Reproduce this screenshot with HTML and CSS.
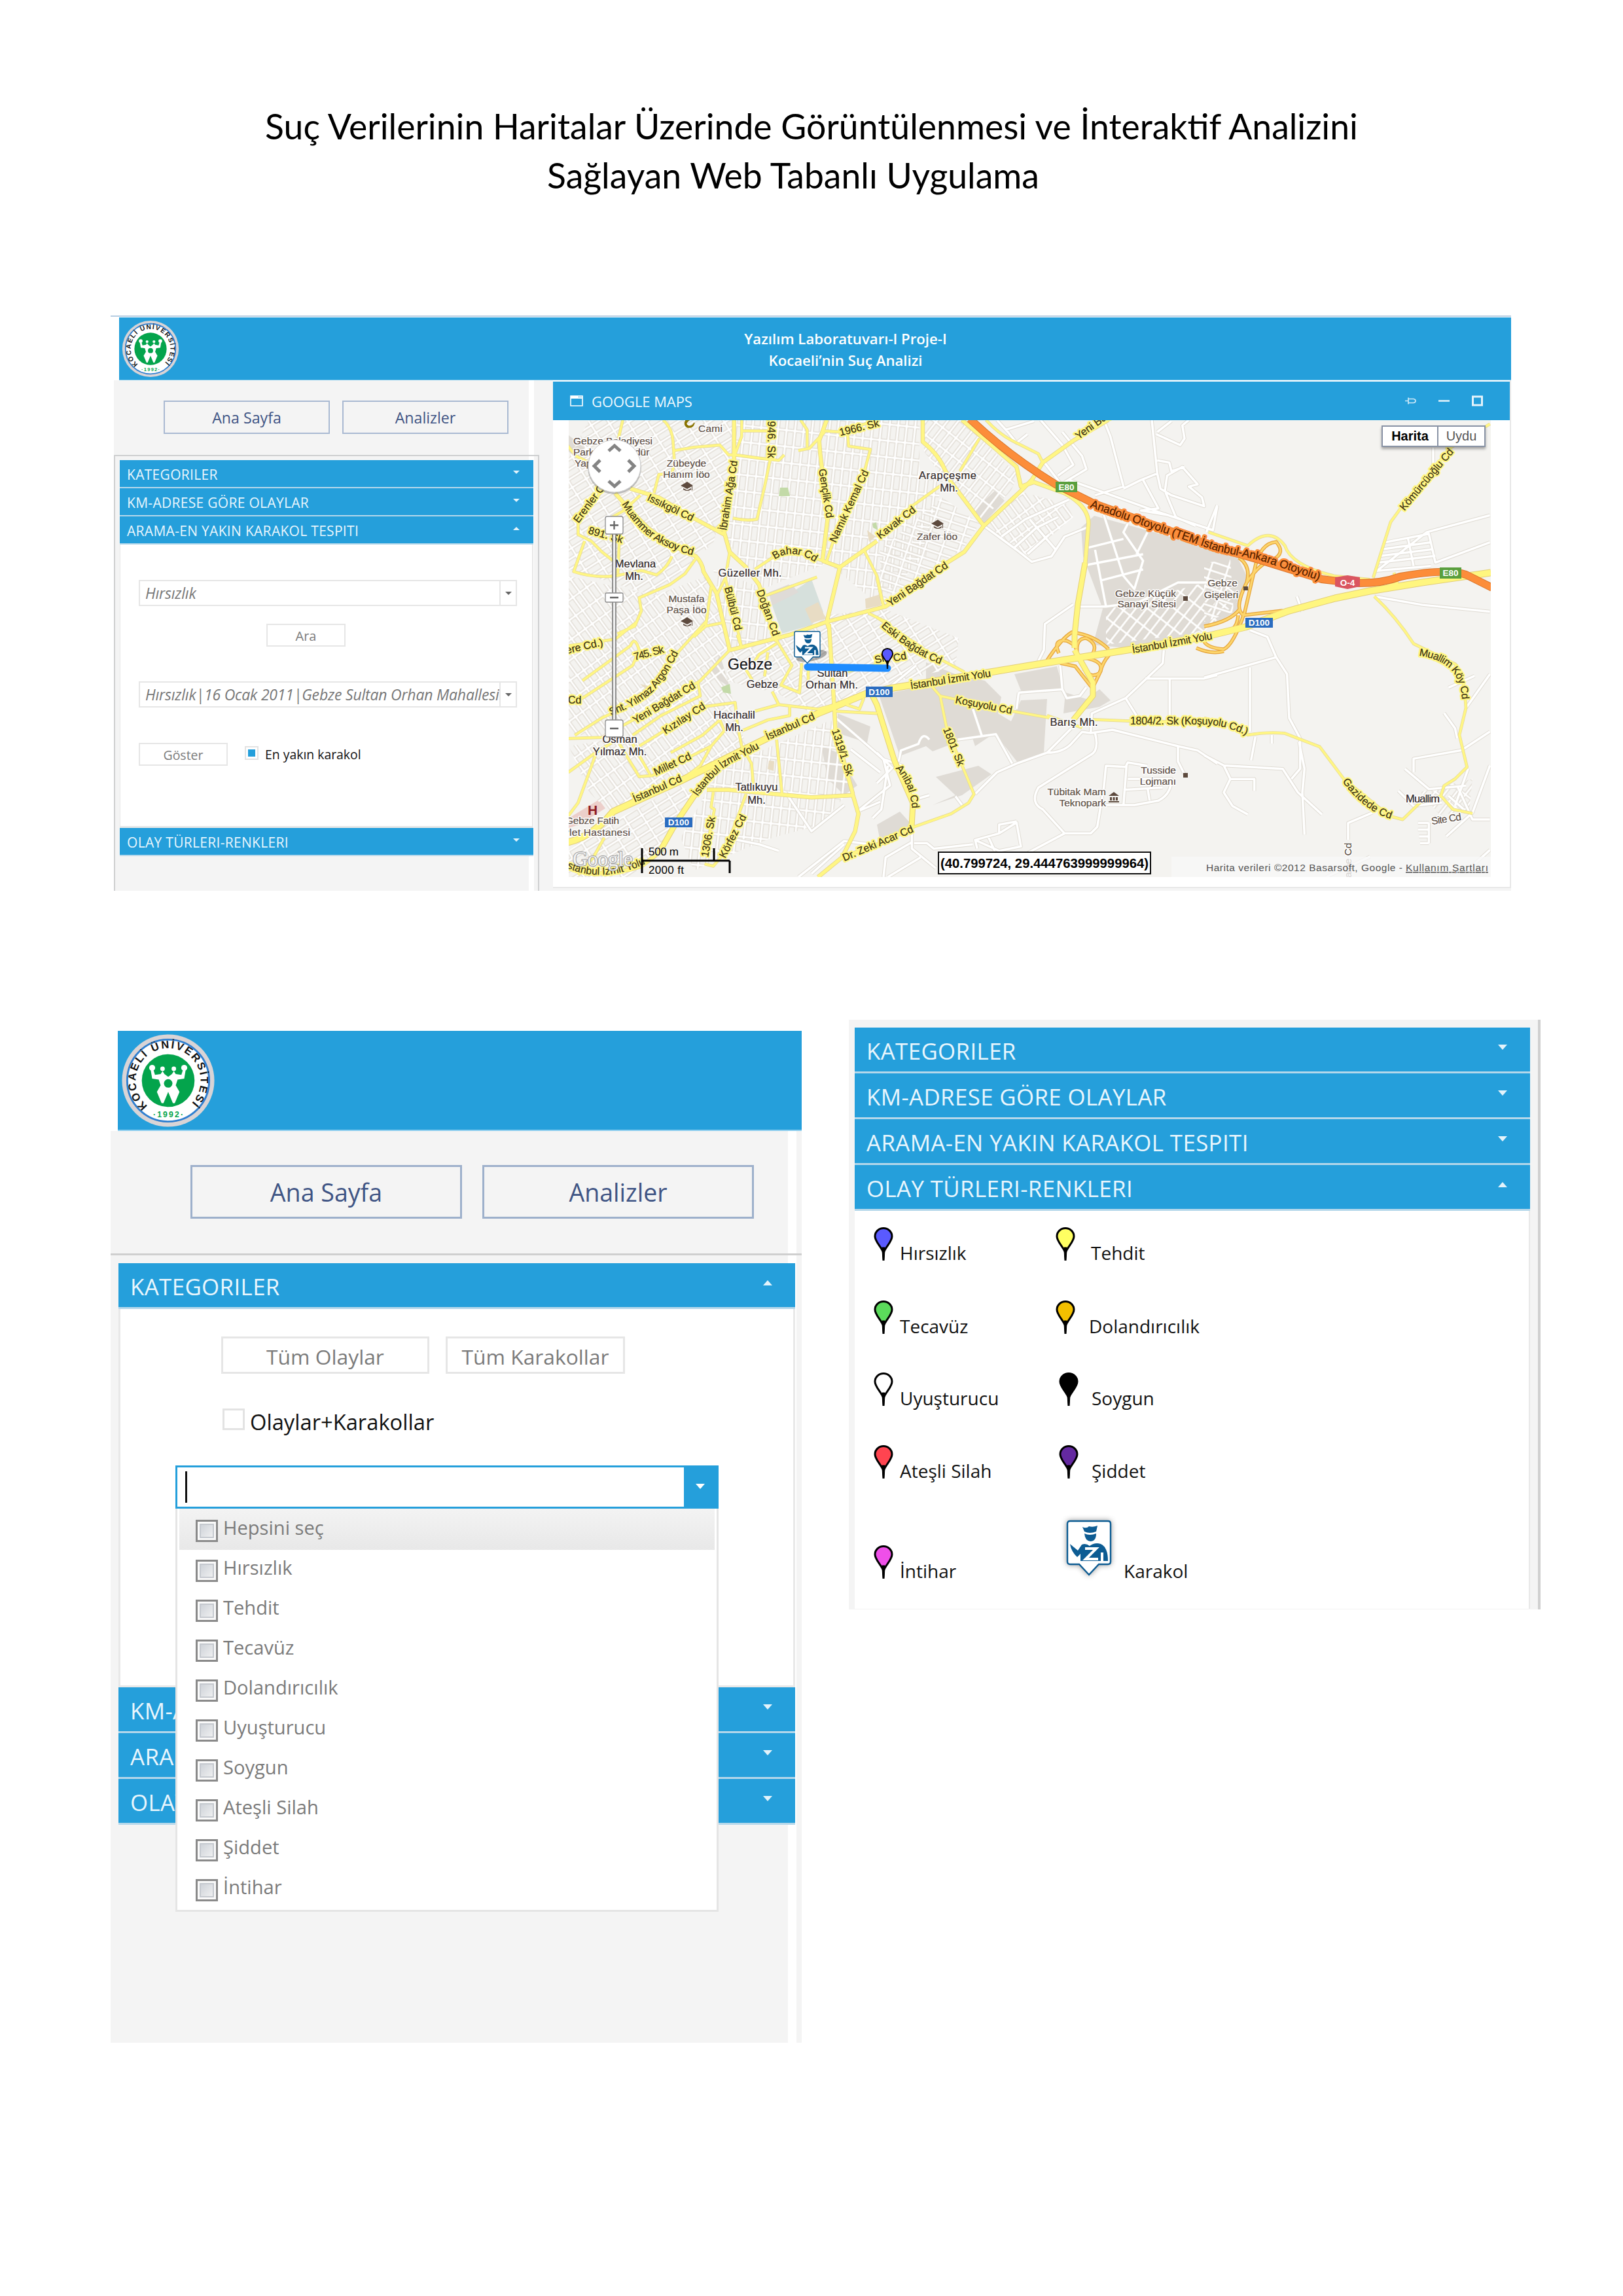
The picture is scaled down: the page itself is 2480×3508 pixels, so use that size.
FILE: index.html
```html
<!DOCTYPE html>
<html lang="tr">
<head>
<meta charset="utf-8">
<title>Kocaeli'nin Suç Analizi</title>
<link rel="stylesheet" href="styles.css">
</head>
<body>
<svg width="0" height="0" class="sprites" aria-hidden="true">
  <defs>
    <symbol id="pin" viewBox="0 0 30 51">
      <path d="M15 39C11 29 2 22 2 14A13 12.500 0 0 1 28 14C28 22 19 29 15 39Z" fill="currentColor" stroke="#000" stroke-width="3"/>
      <path d="M12.800 31L14 51H16L17.200 31Z" stroke="#000" stroke-width="1"/>
    </symbol>
    <symbol id="police" viewBox="0 0 70 86">
      <path d="M6 2H64Q68 2 68 6V64Q68 68 64 68H50L35 84L20 68H6Q2 68 2 64V6Q2 2 6 2Z" fill="#fff" stroke="#0d5c93" stroke-width="2.4"/>
      <path d="M25 11Q31 14 35 10Q41 12 48 9L46 18Q36 22 28 18ZM28 21Q36 25 46 21Q46 33 37 33Q29 32 28 21Z" fill="#0d5c93"/>
      <path d="M6 37L18 47L24 38Q30 35 36 40Q44 34 53 37Q64 42 64 63H57V50H53V63H22V52L17 57Q8 49 6 37Z" fill="#0d5c93"/>
      <path d="M29 44H46L30 60H49" fill="none" stroke="#fff" stroke-width="4"/>
    </symbol>
    <symbol id="crest" viewBox="0 0 100 100">
      <circle cx="50" cy="50" r="49" fill="#d9d4d6"/>
      <circle cx="50" cy="50" r="43.5" fill="#fff" stroke="#2f7fd0" stroke-width="2"/>
      <circle cx="50" cy="50" r="28" fill="#04a44c"/>
      <path id="crest-arc" d="M29 77.500A34.500 34.500 0 1 1 71 77.500" fill="none"/>
      <text font-family="Liberation Sans, Arial, sans-serif" font-size="11.500" font-weight="700" fill="#111"><textPath href="#crest-arc" textLength="165" startOffset="1">KOCAELİ ÜNİVERSİTESİ</textPath></text>
      <text x="50" y="89" text-anchor="middle" font-family="Liberation Sans, Arial, sans-serif" font-size="8.500" font-weight="700" fill="#04a44c" textLength="32">·1992·</text>
      <g fill="#fff"><circle cx="44" cy="37.500" r="2.400"/><circle cx="56" cy="37.500" r="2.400"/><circle cx="33" cy="36.500" r="3.200"/><circle cx="67" cy="36.500" r="3.200"/>
      <path d="M31.500 39H34.500L36 44L42 43L44 40L46 43L50 46L54 43L56 40L58 43L64 44L65.500 39H68.500L67 48L60 49L58 55L62 62L57 74H55L50 62L45 74H43L38 62L42 55L40 49L33 48Z"/></g>
      <circle cx="50" cy="53" r="4.500" fill="#04a44c"/>
    </symbol>
  </defs>
</svg>

<h1 class="title"><span>Suç Verilerinin Haritalar Üzerinde Görüntülenmesi ve İnteraktif Analizini</span><span class="second">Sağlayan Web Tabanlı Uygulama</span></h1>

<section class="app">
  <header class="app-head">
    <svg class="crest"><use href="#crest"/></svg>
    <div class="app-name"><span>Yazılım Laboratuvarı-I Proje-I</span><span class="line2">Kocaeli’nin Suç Analizi</span></div>
  </header>
  <div class="app-body">
    <aside class="side">
      <nav class="nav"><button>Ana Sayfa</button><button>Analizler</button></nav>
      <div class="accordion">
        <div class="bar">KATEGORILER<i class="caret"></i></div>
        <div class="bar">KM-ADRESE GÖRE OLAYLAR<i class="caret"></i></div>
        <div class="bar">ARAMA-EN YAKIN KARAKOL TESPITI<i class="caret up"></i></div>
        <div class="pane search">
          <div class="select"><em>Hırsızlık</em><span><i class="caret dark"></i></span></div>
          <button class="plain ara">Ara</button>
          <div class="select second"><em class="long">Hırsızlık|16 Ocak 2011|Gebze Sultan Orhan Mahallesi</em><span><i class="caret dark"></i></span></div>
          <div class="show"><button class="plain">Göster</button><i class="tick"></i><label>En yakın karakol</label></div>
        </div>
        <div class="bar">OLAY TÜRLERI-RENKLERI<i class="caret"></i></div>
      </div>
    </aside>
    <main class="window">
      <div class="window-head">
        <svg width="20" height="17" viewBox="0 0 20 17"><path d="M1 1H19V16H1Z" fill="none" stroke="#fff" stroke-width="1.600"/><path d="M1 1H19V5H1Z" fill="#fff"/><path d="M13 2.500H14.500M16 2.500H17.500" stroke="#259fdb" stroke-width="1.500"/></svg>
        <h2>GOOGLE MAPS</h2>
        <div class="tools">
          <svg width="17" height="17" viewBox="0 0 17 17"><path d="M0 8.500H5M5 3.500V13.500M5 5.500H13Q16 6 16 8.500Q16 11 13 11.500H5" fill="none" stroke="#cfe9f8" stroke-width="1.700"/></svg>
          <svg width="17" height="17" viewBox="0 0 17 17"><path d="M0 8.500H17" stroke="#e4f3fb" stroke-width="2.500"/></svg>
          <svg width="17" height="17" viewBox="0 0 17 17"><path d="M1.500 2H15.500V15H1.500Z" fill="none" stroke="#e4f3fb" stroke-width="3"/></svg>
        </div>
      </div>
      <div class="map">
      <svg class="map-svg" width="1409" height="698" viewBox="869 642 1409 698">
        <defs>
          <pattern id="grid" width="13" height="25" patternUnits="userSpaceOnUse"><path d="M0 3H13M3 0V25" stroke="#dad4ca" stroke-width="5.200"/><path d="M0 3H13M3 0V25" stroke="#fff" stroke-width="3"/></pattern>
          <pattern id="g60" href="#grid" patternTransform="rotate(58)"/>
          <pattern id="g5" href="#grid" patternTransform="rotate(6)"/>
          <pattern id="g35" href="#grid" patternTransform="rotate(38)"/>
          <pattern id="gm35" href="#grid" patternTransform="rotate(-36)"/>
          <pattern id="gm70" href="#grid" patternTransform="rotate(-72)"/>
          <g id="yellow" fill="none" stroke-linejoin="round">
            <g transform="translate(840 560) scale(.33333)">
              <path d="M335 245L315 330M520 245Q560 280 565 340L572 440L560 490L500 495L478 580M572 385L660 370L780 360L820 405L850 405L960 420L1050 430L1075 405M880 245V320L850 400M885 295H1000M1010 430L985 550L950 700Q900 710 840 695"/>
              <path d="M250 560L130 700V770L190 800L240 850L290 890M160 800L110 940Q200 970 300 960L420 935L490 955Q540 920 560 870M320 770L312 950M415 590L340 660L270 700M670 880L620 950L550 1000L410 1060L420 1120L390 1190L310 1225"/>
              <path d="M825 850L805 970L770 1040M805 970L860 1200L880 1290M740 1010L715 1190L790 1175M715 1190L660 1240M940 930L1030 870L1100 840L1250 890M1225 965L990 1050M1260 295L1330 300L1500 245M1150 245L1180 290V370M1140 385L1190 375L1260 300M1365 300L1370 365L1470 380L1440 490L1300 800L1270 890M1440 840L1500 960L1530 1100M80 360L120 410L200 450M1460 1130L1560 1180"/>
            </g>
            <g transform="translate(840 950) scale(.33333)">
              <path d="M720 -5L560 170L440 350L240 440L115 520M85 110L300 80L400 0M150 270L370 110Q390 60 410 130L380 200L150 350H85M825 130L690 270L530 370L290 500L240 530L85 535M680 280L690 340L510 430L380 520M85 690L210 600L300 545M85 890L130 830L210 610M320 560L410 710L470 705L600 640L740 570L800 500L780 450M380 560L460 700M410 570L540 490L700 390L850 370L860 470L880 570L925 650L935 770M555 600L700 520L780 450M610 720L690 660L740 570"/>
              <path d="M1040 85L1110 200L1060 290L1145 325L1155 190M900 220L930 270M1040 100L960 150L940 180M1020 320L1050 380L940 410M1050 380L1230 400L1310 380M880 500L1000 450L1100 430V385M1185 200V280M1040 540L1065 790M750 780L740 850L755 860L715 1060M900 790L860 900L800 1060L750 1120L710 1110M1310 410L1500 420M1360 380L1420 400L1440 350M1280 250L1560 180M250 990L200 1080L130 1160M860 60L880 120M1040 40V85M1000 140L985 250"/>
            </g>
            <g transform="translate(1340 560) scale(.33333)"><path d="M470 330L380 480M500 245Q560 310 620 340L740 400L760 440M0 780L160 640L300 540M0 970L30 1100M0 1150L60 1190L250 1320L400 1400"/></g>
            <g transform="translate(1340 950) scale(.33333)"><path d="M255 300L290 340L360 355L620 410L790 440M290 340L320 490L445 790L420 830L340 880L170 940L0 1030M990 448L1160 455L1560 460M780 430L940 485"/></g>
            <g transform="translate(1840 560) scale(.33333 .5165)"><path d="M20 490L200 530Q300 470 370 530Q400 590 600 620L760 630M0 1040L110 1060L200 1090Q290 1080 370 1085L530 1125L640 1220L850 1330L910 1340L990 1290L1085 1270M780 680Q880 740 960 820L1150 880Q1190 900 1200 1010L1170 1090L1205 1185L1150 1220L1100 1240L1085 1270L1140 1310L1230 1322M775 625L855 460L900 420L1130 240L1310 170M870 610L885 640L790 660"/></g>
          </g>
          <g id="wide" fill="none" stroke-linejoin="round">
            <g transform="translate(840 560) scale(.33333)"><path d="M845 245V440L800 760L825 850L900 920L960 1000L1000 1140L1040 1260M370 560L500 600L650 690L800 770M300 580L360 650L450 740L560 820L670 870Q700 900 705 940L765 1040L790 1150L825 1300M1270 245L1235 340L1240 400L1275 690L1250 890M1250 890L1330 920L1500 800M1330 920L1270 1170L1280 1200M825 1300L1100 1230L1270 1170L1540 1100L1650 1020L1820 900L1900 850L1990 730L2160 570L2210 520L2260 440L2400 340L2560 245"/></g>
            <g transform="translate(1340 560) scale(.33333)"><path d="M210 245V345Q280 400 310 470L340 530L490 730M390 245L640 460L660 550L720 530L860 580Q970 640 970 720L955 900"/></g>
            <g transform="translate(840 950) scale(.33333)"><path d="M1280 10L1305 400L1310 500L1390 790M720 770H820L1200 805L1390 795L1415 880L1400 960L1340 1080L1230 1170M1340 1080L1560 1000M85 1130Q250 1180 420 1120L500 1060"/></g>
          </g>
          <g id="trunk" fill="none" stroke-linejoin="round">
            <path d="M868 1287Q907 1277 937 1240L1040 1193L1133 1147L1250 1090L1323 1060L1365 1051L1513 1027L1597 1013L1723 993L1840 973L1903 958L1967 934L2040 914L2093 903L2173 890L2278 875"/>
          </g>
          <g id="branch" fill="none" stroke-linejoin="round">
            <path d="M1007 1303L1033 1257L1060 1217L1093 1175L1133 1147M1333 1063L1340 1077L1367 1163L1395 1227L1393 1263M1658 860L1647 923L1642 970V990M1642 993L1670 1043V1063L1640 1100"/>
          </g>
          <g id="ramps" fill="none">
            <path d="M1598 1012Q1622 975 1638 966Q1672 970 1694 992M1618 998Q1608 976 1630 979Q1650 988 1643 1000M1646 996Q1644 975 1660 975Q1678 984 1670 998M1656 1005Q1690 1010 1680 1028Q1668 1038 1656 1022M1620 1013L1643 1018L1672 1055M1700 995Q1685 1010 1682 1025L1670 1050M1917 870L1902 935Q1885 985 1870 992Q1845 990 1840 980M1892 940Q1890 970 1860 966L1840 973M1917 870Q1925 830 1950 828Q1965 845 1945 855Q1925 860 1905 890M1893 852Q1912 865 1905 890Q1885 930 1900 940L1960 933M1840 957Q1880 950 1895 930M1828 990Q1850 1000 1870 995"/>
          </g>
          <path id="tem" d="M1482 640Q1540 695 1613 740L1673 770L1860 837L1923 855L2020 885L2070 891Q2110 892 2140 881Q2210 868 2240 878L2280 898" fill="none"/>
          <g id="white" fill="none" stroke-linejoin="round">
            <g transform="translate(1340 560) scale(.33333)"><path d="M550 245L600 300L640 350L690 310M590 290L720 250M750 245L850 360L900 450L830 500M760 430L860 560M860 530L960 470L940 410L850 300M1040 245L1070 320L1130 550L1000 590M1260 245L1285 490L1210 520L1130 560M1280 310L1390 360L1410 330L1400 270L1430 245M1285 300L1350 250M1285 490L1300 560L1350 590L1500 640L1490 600L1430 550L1470 540L1400 460L1330 500L1320 570L1370 690L1460 730M1285 430L1340 440L1350 480L1410 460M1220 520L1290 650L1210 660L1330 680M880 520L1300 670L1540 750L1560 640M490 730L640 840L710 895L800 870L860 780L970 735M570 780L680 700L880 610M630 830L730 740L830 690M700 700L820 840M690 860L790 770M1040 680L1130 960L1180 1020L1220 890L1130 760L1150 720M970 830L1130 790M960 910L1220 860M1030 980L1220 930M1240 760L1190 860M1000 840L1050 1100M930 1100H1050L1200 1080L1380 990L1560 990M1180 1020L1130 960M900 1090L770 1180L765 1300L740 1350"/></g>
            <g transform="translate(1340 950) scale(.33333)"><path d="M650 325L850 310L870 350L930 340L960 300M650 325L640 400M840 200L850 310M370 540L545 515L620 650M440 400L480 520M100 640L110 590L190 560Q210 500 240 540M0 340L70 290L180 200M780 600L890 490M780 600Q850 600 890 560L940 505L980 510L1080 495L1380 570L1470 590L1560 650M980 510L985 420L1140 350L1310 190L1315 130M1140 350L1190 430M1230 260H1500L1560 245M1342 260V450M450 790L550 690L640 650L780 600M1000 510Q1020 590 980 610L740 760Q700 830 760 860L860 970H980L1010 940L1040 760L1050 660L1140 665L1150 645L1240 660M1130 840L1145 650M1030 840L1180 840L1290 820Q1350 790 1350 720L1150 720M1240 760L1250 820M1130 770L1310 760M1380 570V640L1410 700M860 970L690 1060M450 1000L560 970L640 920L660 1030L560 1050ZM560 970V930L640 915M450 1000L460 1040M510 985L540 1050M170 1015H230L260 1040L440 1020M160 940V1040L270 1130M200 1080L50 1170M160 1010L40 1080L30 1170M50 660L20 860L-20 900M190 810L240 795M360 800L390 840M0 600L70 670L0 740"/></g>
            <g transform="translate(1840 560) scale(.33333 .5165)"><path d="M1050 240V290M10 490L60 410M780 610L1020 490L1310 440M830 520L1030 495L1060 580L1310 520M820 540L1040 520M810 560L1050 540M800 580L1060 560M935 510L960 590M780 605L1040 590M780 680L1000 705L1310 725M210 780L290 800L330 860L380 910L390 1040L440 1100V1190L400 1220M0 920L330 860M210 890V1080M425 680L450 725M0 1150L90 1180L360 1190L430 1260L540 1325M90 1180L120 1220L90 1260L130 1300L200 1325M120 1220H230V1255M235 1095L215 1165M310 1090V1115M435 1110L460 1190L450 1260L460 1385M660 1400V1350L770 1320M1200 1010L1310 910M960 1200V1160L1180 1135L1310 1080M1100 1025L1150 1070L1160 1100M1120 950L1240 915M920 1190L1030 1250L1200 1240M890 1255L960 1300L1090 1290M1150 1300L1210 1190M1110 1390L1230 1320L1310 1180M1160 1240L1230 1340H1310M980 1350H1030M980 1370H1030M985 1390H1030M990 1410H1030M1030 1350V1410M1120 1270L1190 1310M560 1510L760 1450M1190 1500L1310 1430"/></g>
            <path d="M1275 1095L1350 1160L1360 1200L1310 1240M1350 1160L1380 1170M1200 1210L1240 1270L1290 1230M1110 1280L1160 1290L1190 1300M1220 1340L1290 1285L1330 1290M1240 1335L1290 1290M1310 1240L1345 1225M1345 1180L1300 1145"/>
          </g>
        </defs>
        <rect x="869" y="642" width="1409" height="698" fill="#f4f3f0"/>
        <g fill="#dfdbd5">
          <path d="M869 665L900 690L880 700L869 690ZM1488 780L1520 750L1535 765L1503 800ZM1652 806L1672 788L1860 840L1890 850L1905 880L1895 930L1860 952L1780 985L1720 990L1670 985L1685 930L1655 850Z"/>
          <path d="M1343 1062L1415 1048L1415 1012L1460 1030L1505 1040L1530 1065L1525 1090L1545 1102L1560 1070L1600 1068L1595 1150L1555 1165L1520 1120L1490 1140L1485 1125L1425 1148L1415 1140L1375 1155ZM1550 1030L1615 1018L1625 1055L1560 1055ZM1628 1058L1660 1068L1680 1053L1697 1070L1680 1080L1625 1090ZM1430 1187L1495 1170L1515 1183L1470 1215L1425 1230L1460 1215ZM1340 1260L1375 1240L1395 1262L1345 1285ZM1280 1090L1330 1110L1325 1135L1280 1120ZM1255 1140L1280 1150L1310 1200L1290 1215L1265 1190ZM1100 1000L1115 1050L1085 1030ZM1175 905L1205 893L1215 900L1180 925Z"/>
        </g>
        <path d="M869 1250L915 1222L925 1235L885 1260L869 1265Z" fill="#eccfca"/>
        <g>
          <path d="M869 700L900 642H1120L1110 760L1090 830L1000 910L869 870Z" fill="url(#g60)"/>
          <path d="M1120 642H1250L1265 860L1165 900L1110 825Z" fill="url(#g5)"/>
          <path d="M1250 642H1345L1405 642V720L1440 735L1415 850L1340 922L1265 860Z" fill="url(#g5)"/>
          <path d="M1412 642H1470L1555 725L1545 750L1500 795L1445 735L1412 690Z" fill="url(#g35)"/>
          <path d="M1440 760L1497 800L1470 840L1345 920L1345 840Z" fill="url(#gm70)"/>
          <path d="M869 880L1000 910L1080 880L1115 985L1060 1050L930 1130L869 1120Z" fill="url(#gm35)"/>
          <path d="M1090 870L1170 900L1190 980L1115 990Z" fill="url(#g5)"/>
          <path d="M1260 940L1350 930L1465 975L1460 1020L1330 1050L1240 1090L1190 1060L1110 1040L1115 990L1240 965Z" fill="url(#g60)"/>
          <path d="M869 1140L930 1130L1100 1000L1140 1140L1040 1193L930 1240L900 1210Z" fill="url(#gm35)"/>
          <path d="M900 1275L1040 1200L1060 1215L1000 1310L960 1340H869V1300Z" fill="url(#g60)"/>
          <path d="M1100 1175L1270 1100L1300 1205L1255 1260L1180 1280L1130 1300L1060 1330L1040 1280Z" fill="url(#g5)"/>
          <path d="M1555 750L1630 770L1640 790L1570 850L1500 805Z" fill="url(#gm35)"/>
          <path d="M1690 930L1880 880L1890 920L1840 965L1690 985Z" fill="url(#g35)"/>
          <path d="M1840 860L1880 855L1885 935L1840 950Z" fill="url(#gm70)"/>
          <path d="M2170 1210L2250 1190L2245 1240L2200 1245Z" fill="url(#g35)"/>
        </g>
        <path d="M1180 925L1240 885L1258 935L1240 955L1195 968Z" fill="#d6e0dc"/>
        <path d="M1175 907L1210 893L1220 905L1180 925Z" fill="#dfdbd7"/>
        <path d="M1230 930L1250 920L1262 945L1240 952ZM1322 915L1345 908L1346 925L1323 930ZM1325 810L1338 820L1328 828ZM978 1045L1000 1050L995 1060ZM1175 1162L1183 1163L1182 1178L1173 1175Z" fill="#e8dcc4"/>
        <path d="M1192 745L1204 745L1207 758H1190ZM1333 800L1339 798L1341 810L1334 806ZM1102 1050L1115 1045L1117 1060L1105 1058ZM1060 1178L1073 1173L1068 1183Z" fill="#c3daa8"/>
        <use href="#white" stroke="#dfdbd3" stroke-width="5.500"/><use href="#white" stroke="#fff" stroke-width="3.500"/>
        <use href="#yellow" stroke="#e3d79a" stroke-width="4.800"/><use href="#wide" stroke="#e3d28a" stroke-width="6.500"/>
        <use href="#ramps" stroke="#e5a53c" stroke-width="5.500"/>
        <use href="#branch" stroke="#e3cf78" stroke-width="9"/><use href="#trunk" stroke="#e3cf78" stroke-width="11"/>
        <use href="#yellow" stroke="#fff684" stroke-width="3.400"/><use href="#wide" stroke="#fff684" stroke-width="5"/>
        <use href="#ramps" stroke="#fdd56b" stroke-width="3"/>
        <use href="#branch" stroke="#fff67f" stroke-width="7"/><use href="#trunk" stroke="#fff67f" stroke-width="9"/>
        <use href="#tem" stroke="#d9752a" stroke-width="12"/><use href="#tem" stroke="#fc8d3a" stroke-width="10"/>

        <use href="#road-names" stroke="#fff684" stroke-width="5"/>
        <g class="road" id="road-names">
          <path id="t1" d="M884 800L926 744"/><text><textPath href="#t1">Erenler C</textPath></text>
          <path id="t2" d="M988 764L1064 800"/><text><textPath href="#t2" textLength="76">Issıkgöl Cd</textPath></text>
          <path id="t3" d="M950 770Q975 812 1005 828T1074 852"/><text><textPath href="#t3" textLength="138">Muammer Aksoy Cd</textPath></text>
          <text transform="translate(898 815) rotate(16)">891. Sk</text>
          <text transform="translate(1110 811) rotate(-81)" textLength="108">İbrahim Ağa Cd</text>
          <text transform="translate(1173 634) rotate(90)" textLength="66">1946. Sk</text>
          <text transform="translate(1284 666) rotate(-14)" textLength="62">1966. Sk</text>
          <text transform="translate(1251 717) rotate(81)" textLength="76">Gençlik Cd</text>
          <text transform="translate(1277 830) rotate(-65)" textLength="120">Namık Kemal Cd</text>
          <path id="t4" d="M1184 855Q1210 836 1246 859"/><text><textPath href="#t4" textLength="66">Bahar Cd</textPath></text>
          <text transform="translate(1107 898) rotate(76)" textLength="68">Bülbül Cd</text>
          <text transform="translate(1156 903) rotate(70)" textLength="74">Doğan Cd</text>
          <text transform="translate(1345 824) rotate(-38)" textLength="70">Kavak Cd</text>
          <text transform="translate(1360 927) rotate(-34)" textLength="108">Yeni Bağdat Cd</text>
          <path id="t5" d="M1346 957Q1395 1000 1440 1016"/><text><textPath href="#t5" textLength="108">Eski Bağdat Cd</textPath></text>
          <text transform="translate(1648 672) rotate(-36)">Yeni Bağ</text>
          <text transform="translate(866 999) rotate(-13)">ere Cd.)</text>
          <text transform="translate(868 1075)">Cd</text>
          <text transform="translate(970 1009) rotate(-15)" textLength="47">745. Sk</text>
          <path id="t6" d="M933 1093Q980 1076 1000 1054T1040 990"/><text><textPath href="#t6" textLength="146">Snt. Yılmaz Argon Cd</textPath></text>
          <text transform="translate(971 1106) rotate(-31)" textLength="108">Yeni Bağdat Cd</text>
          <text transform="translate(1017 1122) rotate(-33)" textLength="74">Kızılay Cd</text>
          <text transform="translate(1002 1185) rotate(-25)" textLength="61">Millet Cd</text>
          <text transform="translate(970 1226) rotate(-24)" textLength="80">İstanbul Cd</text>
          <text transform="translate(1173 1131) rotate(-24)" textLength="80">İstanbul Cd</text>
          <path id="t7" d="M1066 1217Q1090 1182 1115 1167L1165 1141"/><text><textPath href="#t7" textLength="122">İstanbul İzmit Yolu</textPath></text>
          <text transform="translate(1271 1116) rotate(72)" textLength="74">1319/1. Sk</text>
          <text transform="translate(1082 1310) rotate(-80)" textLength="62">1306. Sk</text>
          <text transform="translate(1108 1312) rotate(-63)" textLength="72">Körfez Cd</text>
          <path id="t8" d="M866 1326Q920 1350 986 1320"/><text><textPath href="#t8">stanbul İzmit Yolu</textPath></text>
          <text transform="translate(1290 1316) rotate(-23)" textLength="116">Dr. Zeki Acar Cd</text>
          <text transform="translate(1392 1053) rotate(-9)" textLength="124">İstanbul İzmit Yolu</text>
          <text transform="translate(1731 998) rotate(-10)" textLength="124">İstanbul İzmit Yolu</text>
          <text transform="translate(1459 1074) rotate(11)" textLength="88">Koşuyolu Cd</text>
          <text transform="translate(1441 1114) rotate(68)" textLength="62">1801. Sk</text>
          <path id="t9" d="M1368 1174Q1392 1200 1394 1240"/><text><textPath href="#t9" textLength="68">Anibal Cd</textPath></text>
          <path id="t10" d="M1727 1107H1840Q1870 1107 1906 1124"/><text><textPath href="#t10" textLength="180">1804/2. Sk (Koşuyolu Cd.)</textPath></text>
          <text transform="translate(2146 781) rotate(-50)" textLength="118">Kömürcüoğlu Cd</text>
          <path id="t11" d="M2168 1002Q2235 1010 2234 1076"/><text><textPath href="#t11" textLength="104">Muallim Köy Cd</textPath></text>
          <path id="t12" d="M2051 1194Q2085 1240 2128 1252"/><text><textPath href="#t12" textLength="95">Gazidede Cd</textPath></text>
          <text transform="translate(1338 1014) rotate(-15)">Sk</text><text transform="translate(1366 1011) rotate(-12)">Cd</text>
        </g>
        <use href="#tem-name" stroke="#fc8d3a" stroke-width="6"/>
        <g class="tem-label" id="tem-name">
          <path id="t15" d="M1665 775L1860 842L1925 856L2025 890"/><text><textPath href="#t15" textLength="368">Anadolu Otoyolu (TEM İstanbul-Ankara Otoyolu)</textPath></text></g>
        <use href="#poi-names" stroke="#fff" stroke-width="3"/>
        <g class="poi" id="poi-names">
          <text x="1067" y="660" textLength="37">Cami</text><text x="876" y="679" textLength="121">Gebze Belediyesi</text><text x="876" y="696">Park</text><text x="970" y="696">dür</text><text x="878" y="713">Yapı</text>
          <text x="1049" y="713" class="mid">Zübeyde</text><text x="1049" y="730" class="mid">Hanım İöo</text>
          <text x="1049" y="920" class="mid">Mustafa</text><text x="1049" y="937" class="mid">Paşa İöo</text>
          <text x="1432" y="825" class="mid">Zafer İöo</text>
          <text x="864" y="1259" textLength="82">Gebze Fatih</text><text x="862" y="1277" textLength="101">vlet Hastanesi</text>
          <text x="1797" y="912" class="end">Gebze Küçük</text><text x="1797" y="928" class="end">Sanayi Sitesi</text>
          <text x="1868" y="896" class="mid">Gebze</text><text x="1866" y="914" class="mid">Gişeleri</text>
          <text x="1797" y="1182" class="end">Tusside</text><text x="1797" y="1199" class="end">Lojmanı</text>
          <text x="1690" y="1215" class="end">Tübitak Mam</text><text x="1690" y="1232" class="end">Teknopark</text>
          <text transform="translate(2188 1260) rotate(-9)" textLength="46">Site Cd</text><text transform="translate(2065 1341) rotate(-90)">alpe Cd</text>
        </g>
        <use href="#place-names" stroke="#fff" stroke-width="3"/>
        <g class="place" id="place-names">
          <text x="1448" y="732" class="mid" textLength="88">Arapçeşme</text><text x="1450" y="751" class="mid">Mh.</text>
          <text x="971" y="867" class="mid">Mevlana</text><text x="969" y="886" class="mid">Mh.</text>
          <text x="1146" y="881" class="mid" textLength="97">Güzeller Mh.</text>
          <text x="1165" y="1051" class="mid">Gebze</text><text x="1272" y="1034" class="mid">Sultan</text><text x="1271" y="1052" class="mid" textLength="80">Orhan Mh.</text>
          <text x="947" y="1135" class="mid">Osman</text><text x="947" y="1154" class="mid">Yılmaz Mh.</text>
          <text x="1122" y="1098" class="mid">Hacıhalil</text><text x="1122" y="1117" class="mid">Mh.</text>
          <text x="1156" y="1208" class="mid">Tatlıkuyu</text><text x="1156" y="1228" class="mid">Mh.</text>
          <text x="1641" y="1109" class="mid" textLength="73">Barış Mh.</text><text x="2174" y="1226" class="mid" textLength="52">Muallim</text>
          <text x="1112" y="1023" class="city" textLength="68">Gebze</text>
        </g>
        <g fill="#5d4a3e"><path id="cap" d="M1040 742L1050 736L1059 742L1050 747ZM1044 746L1050 749L1056 746V748Q1050 752 1044 748ZM1057 743H1058V749H1057Z"/><use href="#cap" y="207"/><use href="#cap" x="383" y="58"/>
          <path d="M1808 911H1815V918H1808ZM1900 896H1907V902H1900ZM1808 1181H1815V1188H1808ZM1694 1216L1702 1210L1710 1216ZM1696 1218H1699V1223H1696ZM1700.500 1218H1703.500V1223H1700.500ZM1705 1218H1708V1223H1705ZM1694 1224H1710V1226H1694Z"/></g>
        <path d="M1053 642Q1045 648 1052 651Q1058 652 1061 646Q1059 654 1051 653Q1044 650 1048 642Z" fill="#8a7400" stroke="#8a7400" stroke-width="1.500"/>
        <text x="898" y="1245" class="hosp">H</text>
        <g class="shield">
          <rect x="1613" y="736" width="33" height="16" fill="#5a9f3e"/><text x="1629.500" y="749">E80</text>
          <rect x="2200" y="867" width="33" height="17" fill="#5a9f3e"/><text x="2216.500" y="880">E80</text>
          <path d="M2040 882L2059 879L2078 882V896L2059 900L2040 896Z" fill="#da5560"/><text x="2059" y="895">O-4</text>
          <rect x="1323" y="1049" width="41" height="16" fill="#2a6cc0"/><text x="1343.500" y="1062">D100</text>
          <rect x="1016" y="1249" width="42" height="15" fill="#2a6cc0"/><text x="1037" y="1261">D100</text>
          <rect x="1903" y="944" width="42" height="15" fill="#2a6cc0"/><text x="1924" y="956">D100</text>
        </g>
        <path d="M1234 1019L1356 1021" stroke="#1e8cff" stroke-width="11" stroke-linecap="round"/>
        <ellipse cx="1240" cy="1002" rx="24" ry="8" fill="#000" opacity=".3" transform="rotate(-12 1240 1002)"/>
        <use href="#police" x="1212" y="963.500" width="43" height="51"/>
        <use href="#pin" x="1346" y="990" width="20" height="32" color="#5a5aff"/>
        <g>
          <circle cx="939" cy="714" r="41" fill="#777" opacity=".45"/><circle cx="939" cy="712" r="40" fill="#fff" stroke="#d2d2d2"/>
          <path d="M930 689L939 681L948 689M930 735L939 743L948 735M917 703L908 712L917 721M960 703L969 712L960 721" fill="none" stroke="#848484" stroke-width="5"/>
          <path d="M936 812V1102M941 812V1102" stroke="#777" stroke-width="1.600"/><path d="M938.500 812V1102" stroke="#eee" stroke-width="3"/>
          <g fill="#fff" stroke="#8b8b8b" stroke-width="1.300"><rect x="925" y="789" width="27" height="27" rx="3"/><rect x="925" y="906" width="27" height="14" rx="2"/><rect x="925" y="1100" width="27" height="26" rx="3"/></g>
          <path d="M932 802.500H945M938.500 796V809M932 913H945M932 1113H945" stroke="#666" stroke-width="2.300"/>
        </g>
        <text x="875" y="1323" class="google" textLength="92">Google</text>
        <path d="M981 1296V1334M981 1315H1115M1091 1296V1315M1115 1315V1334" fill="none" stroke="#000" stroke-width="3"/>
        <g class="scale"><text x="991" y="1307" textLength="46">500 m</text><text x="991" y="1335" textLength="54">2000 ft</text></g>
        <rect x="1790" y="1309" width="488" height="31" fill="#f8f8f7" opacity=".8"/>
        <g class="legal"><text x="1843" y="1331" textLength="300">Harita verileri ©2012 Basarsoft, Google -</text><text x="2148" y="1331" textLength="126" text-decoration="underline">Kullanım Şartları</text></g>
      </svg>
        <div class="map-types"><b>Harita</b><span>Uydu</span></div>
        <div class="coords">(40.799724, 29.444763999999964)</div>
      </div>
    </main>
  </div>
</section>

<div class="details">
  <section class="left">
    <header class="big-head"><svg class="crest"><use href="#crest"/></svg></header>
    <div class="left-body">
      <nav class="nav"><button>Ana Sayfa</button><button>Analizler</button></nav>
      <div class="accordion large">
        <div class="bar">KATEGORILER<i class="caret up"></i></div>
        <div class="pane cats">
          <div class="pair"><button class="plain a">Tüm Olaylar</button><button class="plain b">Tüm Karakollar</button></div>
          <div class="both"><i></i><label>Olaylar+Karakollar</label></div>
          <div class="combo"><div class="field"></div><span><i class="caret"></i></span>
            <ul class="drop"><li class="on"><i></i>Hepsini seç</li><li><i></i>Hırsızlık</li><li><i></i>Tehdit</li><li><i></i>Tecavüz</li><li><i></i>Dolandırıcılık</li><li><i></i>Uyuşturucu</li><li><i></i>Soygun</li><li><i></i>Ateşli Silah</li><li><i></i>Şiddet</li><li><i></i>İntihar</li></ul>
          </div>
        </div>
        <div class="bar">KM-ADRESE GÖRE OLAYLAR<i class="caret"></i></div>
        <div class="bar">ARAMA-EN YAKIN KARAKOL TESPITI<i class="caret"></i></div>
        <div class="bar">OLAY TÜRLERI-RENKLERI<i class="caret"></i></div>
      </div>
    </div>
  </section>
  <section class="right">
    <div class="accordion large">
      <div class="bar">KATEGORILER<i class="caret"></i></div>
      <div class="bar">KM-ADRESE GÖRE OLAYLAR<i class="caret"></i></div>
      <div class="bar">ARAMA-EN YAKIN KARAKOL TESPITI<i class="caret"></i></div>
      <div class="bar">OLAY TÜRLERI-RENKLERI<i class="caret up"></i></div>
      <div class="pane legend">
        <div class="kind blue"><svg><use href="#pin"/></svg>Hırsızlık</div><div class="kind yellow wide"><svg><use href="#pin"/></svg>Tehdit</div>
        <div class="kind green"><svg><use href="#pin"/></svg>Tecavüz</div><div class="kind amber mid"><svg><use href="#pin"/></svg>Dolandırıcılık</div>
        <div class="kind white"><svg><use href="#pin"/></svg>Uyuşturucu</div><div class="kind black shift"><svg><use href="#pin"/></svg>Soygun</div>
        <div class="kind red"><svg><use href="#pin"/></svg>Ateşli Silah</div><div class="kind purple shift"><svg><use href="#pin"/></svg>Şiddet</div>
        <div class="kind pink"><svg><use href="#pin"/></svg>İntihar</div><div class="kind station"><svg><use href="#police"/></svg>Karakol</div>
      </div>
    </div>
  </section>
</div>
</body>
</html>
```

FILE: styles.css
```css
* { box-sizing: border-box; }
body { margin: 0; width: 2480px; height: 3508px; background: #fff; font-family: "Open Sans", "Noto Sans", sans-serif; color: #111; overflow: hidden; }
button { font: inherit; padding: 0; margin: 0; background: none; }
.sprites { display: block; }
.title { margin: 0; height: 482px; padding-top: 155px; display: flex; flex-direction: column; align-items: center; font: 400 53.500px/75px Lato, "Noto Sans", sans-serif; color: #000; white-space: nowrap; }
.title .second { margin-right: 56px; }

/* application screenshot */
.app { margin-left: 169px; width: 2140px; height: 879px; border-top: 2px solid #b7cde2; padding-left: 5px; }
.app-head { margin: 1px 0 0 8px; height: 96px; background: #259fdb; display: flex; align-items: center; border-bottom: 1px solid #6fc0e8; }
.app-head .crest { width: 90px; height: 88px; margin-left: 3px; }
.app-name { flex: 1; text-align: center; color: #fff; font-size: 22.200px; line-height: 33px; font-weight: 600; display: flex; flex-direction: column; padding: 2px 0 0; }
.app-body { display: flex; height: 780px; background: linear-gradient(90deg, #f4f4f4 634px, #fff 634px, #fff 642px, #f4f4f4 642px); }
.side { width: 671px; flex: none; }
.nav { display: flex; }
.side .nav { height: 114px; padding: 31px 0 0 76px; gap: 19px; }
.nav button { width: 254px; height: 51px; border: 2px solid #a9b9d2; color: #3f5484; font-size: 23.200px; }
.side .accordion { width: 650px; height: 666px; border: 2px solid #cfd0d1; border-bottom: 0; padding: 6px 7px 0; }
.bar { height: 43px; flex: none; background: #259fdb; color: #e9f6fd; font-size: 21px; letter-spacing: .3px; line-height: 43px; padding: 1px 21px 0 11px; display: flex; justify-content: space-between; border-bottom: 2px solid #b4d7ea; white-space: nowrap; }
.caret { width: 0; height: 0; border: 5px solid transparent; border-top: 5px solid #e3f3fb; border-bottom: 0; margin-top: 15px; }
.caret.up { border-top: 0; border-bottom: 5px solid #e3f3fb; }
.caret.dark { border-top-color: #666; margin: 0; }
.pane { background: #fff; }
.search { height: 433px; border: 2px solid #e8e8e8; border-width: 0 2px 3px 1px; padding: 54px 0 0 28px; }
.select { width: 578px; height: 40px; border: 2px solid #e6e6e6; display: flex; color: #777; font-size: 23px; line-height: 37px; padding-left: 8px; }
.select em { width: 541px; white-space: nowrap; letter-spacing: -.2px; }
.select span { flex: 1; border-left: 2px solid #e6e6e6; display: flex; align-items: center; justify-content: center; }
.plain { border: 2px solid #e6e6e6; color: #7b7b7b; display: block; }
.ara { width: 121px; height: 35px; margin: 27px 0 53px 195px; font-size: 20px; padding-top: 2px; }
.show { margin-top: 54px; display: flex; align-items: flex-start; }
.show .plain { width: 136px; height: 35px; font-size: 19.500px; padding-top: 2px; }
.tick { width: 21px; height: 21px; margin: 5px 10px 0 26px; border: 2px solid #e3e3e3; background: #259fdb; background-clip: content-box; padding: 3px; }
.show label { font-size: 19.400px; line-height: 36px; color: #111; }
.window { flex: 1; margin-right: 0; height: 776px; background: #fff; border: 2px solid #e8e8e8; border-width: 0 2px 2px 0; padding-top: 2px; display: flex; flex-direction: column; }
.window-head { height: 59px; background: #259fdb; display: flex; align-items: center; padding: 0 41px 0 26px; }
.window-head h2 { margin: 1px 0 0 13px; font-size: 21.900px; font-weight: 400; color: #edf8fe; }
.tools { margin-left: auto; display: flex; gap: 34px; }
.map { margin-left: 24px; width: 1409px; height: 698px; position: relative; overflow: hidden; }
.map-svg { display: block; }
.map-svg path { vector-effect: non-scaling-stroke; }
.map-svg text { font-family: "Liberation Sans", Arial, sans-serif; paint-order: stroke; stroke-linejoin: round; }
.road path, .tem-label path { fill: none; stroke: none; }
.road text { font-size: 16px; fill: #4d431c; }
.tem-label text { font-size: 17.500px; fill: #5f2700; }
.poi text { font-size: 15.500px; fill: #6d5f56; }
.place text { font-size: 16.500px; fill: #443b3b; }
.map-svg .mid { text-anchor: middle; }
.map-svg .end { text-anchor: end; }
.place .city { font-size: 23px; fill: #222; }
.map-svg .hosp { font-size: 21px; font-weight: 700; fill: #8d1d25; }
.shield text { font-size: 13.500px; font-weight: 700; fill: #fff; text-anchor: middle; }
.map-svg .google { font-family: "Liberation Serif", serif; font-size: 32px; fill: #f3f3f3; stroke: #999; stroke-width: 2px; }
.scale text { font-size: 17px; stroke: #f4f3f0; stroke-width: 1px; }
.legal text { font-size: 15.500px; fill: #555; }
.map-types { position: absolute; right: 8px; top: 8px; display: flex; height: 33px; width: 159px; background: #fff; border: 2px solid #8993a5; box-shadow: 0 3px 4px #0005; font: 20px/29px "Liberation Sans", Arial, sans-serif; text-align: center; }
.map-types b { width: 85px; border-right: 2px solid #8993a5; color: #000; }
.map-types span { flex: 1; color: #555; }
.coords { position: absolute; left: 564px; top: 659px; width: 326px; height: 35px; border: 2px solid #111; background: #fff; font: 700 20.300px/32px "Liberation Sans", Arial, sans-serif; text-align: center; white-space: nowrap; color: #000; }

/* enlarged panels */
.details { display: flex; align-items: flex-start; padding: 197px 0 0 169px; }
.left { width: 1056px; margin-top: 17px; height: 1546px; }
.big-head { margin-left: 11px; height: 153px; background: #259fdb; display: flex; align-items: center; border-bottom: 2px solid #8ccdee; }
.big-head .crest { width: 146px; height: 144px; margin-left: 4px; }
.left-body { height: 1393px; background: linear-gradient(90deg, #f4f4f4 1035px, #fff 1035px, #fff 1048px, #f4f4f4 1048px); }
.left .nav { height: 187px; padding: 52px 0 0 122px; gap: 31px; }
.left .nav button { width: 415px; height: 82px; border: 3px solid #9db0cb; font-size: 37.600px; }
.left .accordion { border-top: 3px solid #cfcfcf; padding: 12px 10px 0 12px; }
.large .bar { height: 70px; font-size: 34.800px; letter-spacing: .4px; line-height: 70px; padding: 1px 35px 0 18px; border-bottom-width: 3px; }
.large .caret { border-width: 8px 7.500px 0; margin-top: 25px; }
.large .caret.up { border-width: 0 7.500px 8px; }
.cats { height: 578px; border: 3px solid #e8e8e8; border-top: 0; padding: 42px 0 0 154px; }
.pair { display: flex; gap: 25px; }
.cats .plain { height: 57px; border-width: 3px; font-size: 31.800px; padding-top: 3px; }
.plain.a { width: 318px; }
.plain.b { width: 274px; }
.both { display: flex; margin: 53px 0 0 2px; height: 35px; align-items: flex-start; font-size: 32.700px; line-height: 42px; }
.both i { width: 34px; height: 33px; border: 3px solid #e3e3e3; margin-right: 8px; }
.combo { position: relative; margin: 52px 0 0 -70px; width: 830px; height: 66px; border: 3px solid #259fdb; display: flex; padding: 6px 0 6px 12px; background: #fff; }
.field { flex: 1; border-left: 3px solid #111; }
.combo span { width: 50px; margin: -6px 0; background: #259fdb; display: flex; justify-content: center; }
.combo .caret { border-top-color: #fff; }
.drop { position: absolute; z-index: 1; left: -3px; top: 63px; width: 830px; height: 616px; margin: 0; padding: 0 3px; list-style: none; background: #fff; border: 3px solid #e5e5e5; border-top: 0; color: #7b7b7b; font-size: 29.100px; }
.drop li { height: 61px; line-height: 58px; display: flex; padding-left: 25px; }
.drop .on { height: 63px; background: linear-gradient(#f3f3f3, #e8e8e8); margin-bottom: -2px; }
.drop i { width: 34px; height: 34px; margin: 17px 8px 0 0; border: 3px solid #8a8a8a; background: linear-gradient(135deg, #c6cbd2, #f7f7f7) padding-box; box-shadow: inset 0 0 0 3px #fafafa, inset 0 0 0 5px #c5c9cf; }
.right { margin-left: 72px; width: 1057px; height: 901px; background: #f4f4f4; border-right: 4px solid #d0d0d0; padding: 12px 12px 0 9px; }
.legend { height: 608px; border-right: 2px solid #e8e8e8; display: grid; grid-template-columns: 278px 1fr; grid-template-rows: 112px 110px 111px 153px 100px; padding: 25px 0 0 29px; font-size: 28px; }
.kind { display: flex; height: 53px; line-height: 79px; white-space: nowrap; }
.kind svg { width: 30px; height: 51px; margin-right: 10px; flex: none; }
.kind.wide svg { margin-right: 24px; }
.kind.mid svg { margin-right: 21px; }
.shift { padding-left: 5px; }
.kind.shift svg { margin-right: 20px; }
.station { margin-top: -39px; padding-left: 16px; height: 90px; line-height: 156px; }
.kind.station svg { width: 70px; height: 86px; margin-right: 18px; filter: drop-shadow(0 0 4px #0006); }
.blue { color: #5a5aff; } .yellow { color: #ffff62; } .green { color: #5bdb5b; } .amber { color: #f3c000; } .white { color: #fff; }
.black { color: #000; } .red { color: #ff4450; } .purple { color: #6429a0; } .pink { color: #ef4fe9; }
.kind { -webkit-text-fill-color: #111; }
```
